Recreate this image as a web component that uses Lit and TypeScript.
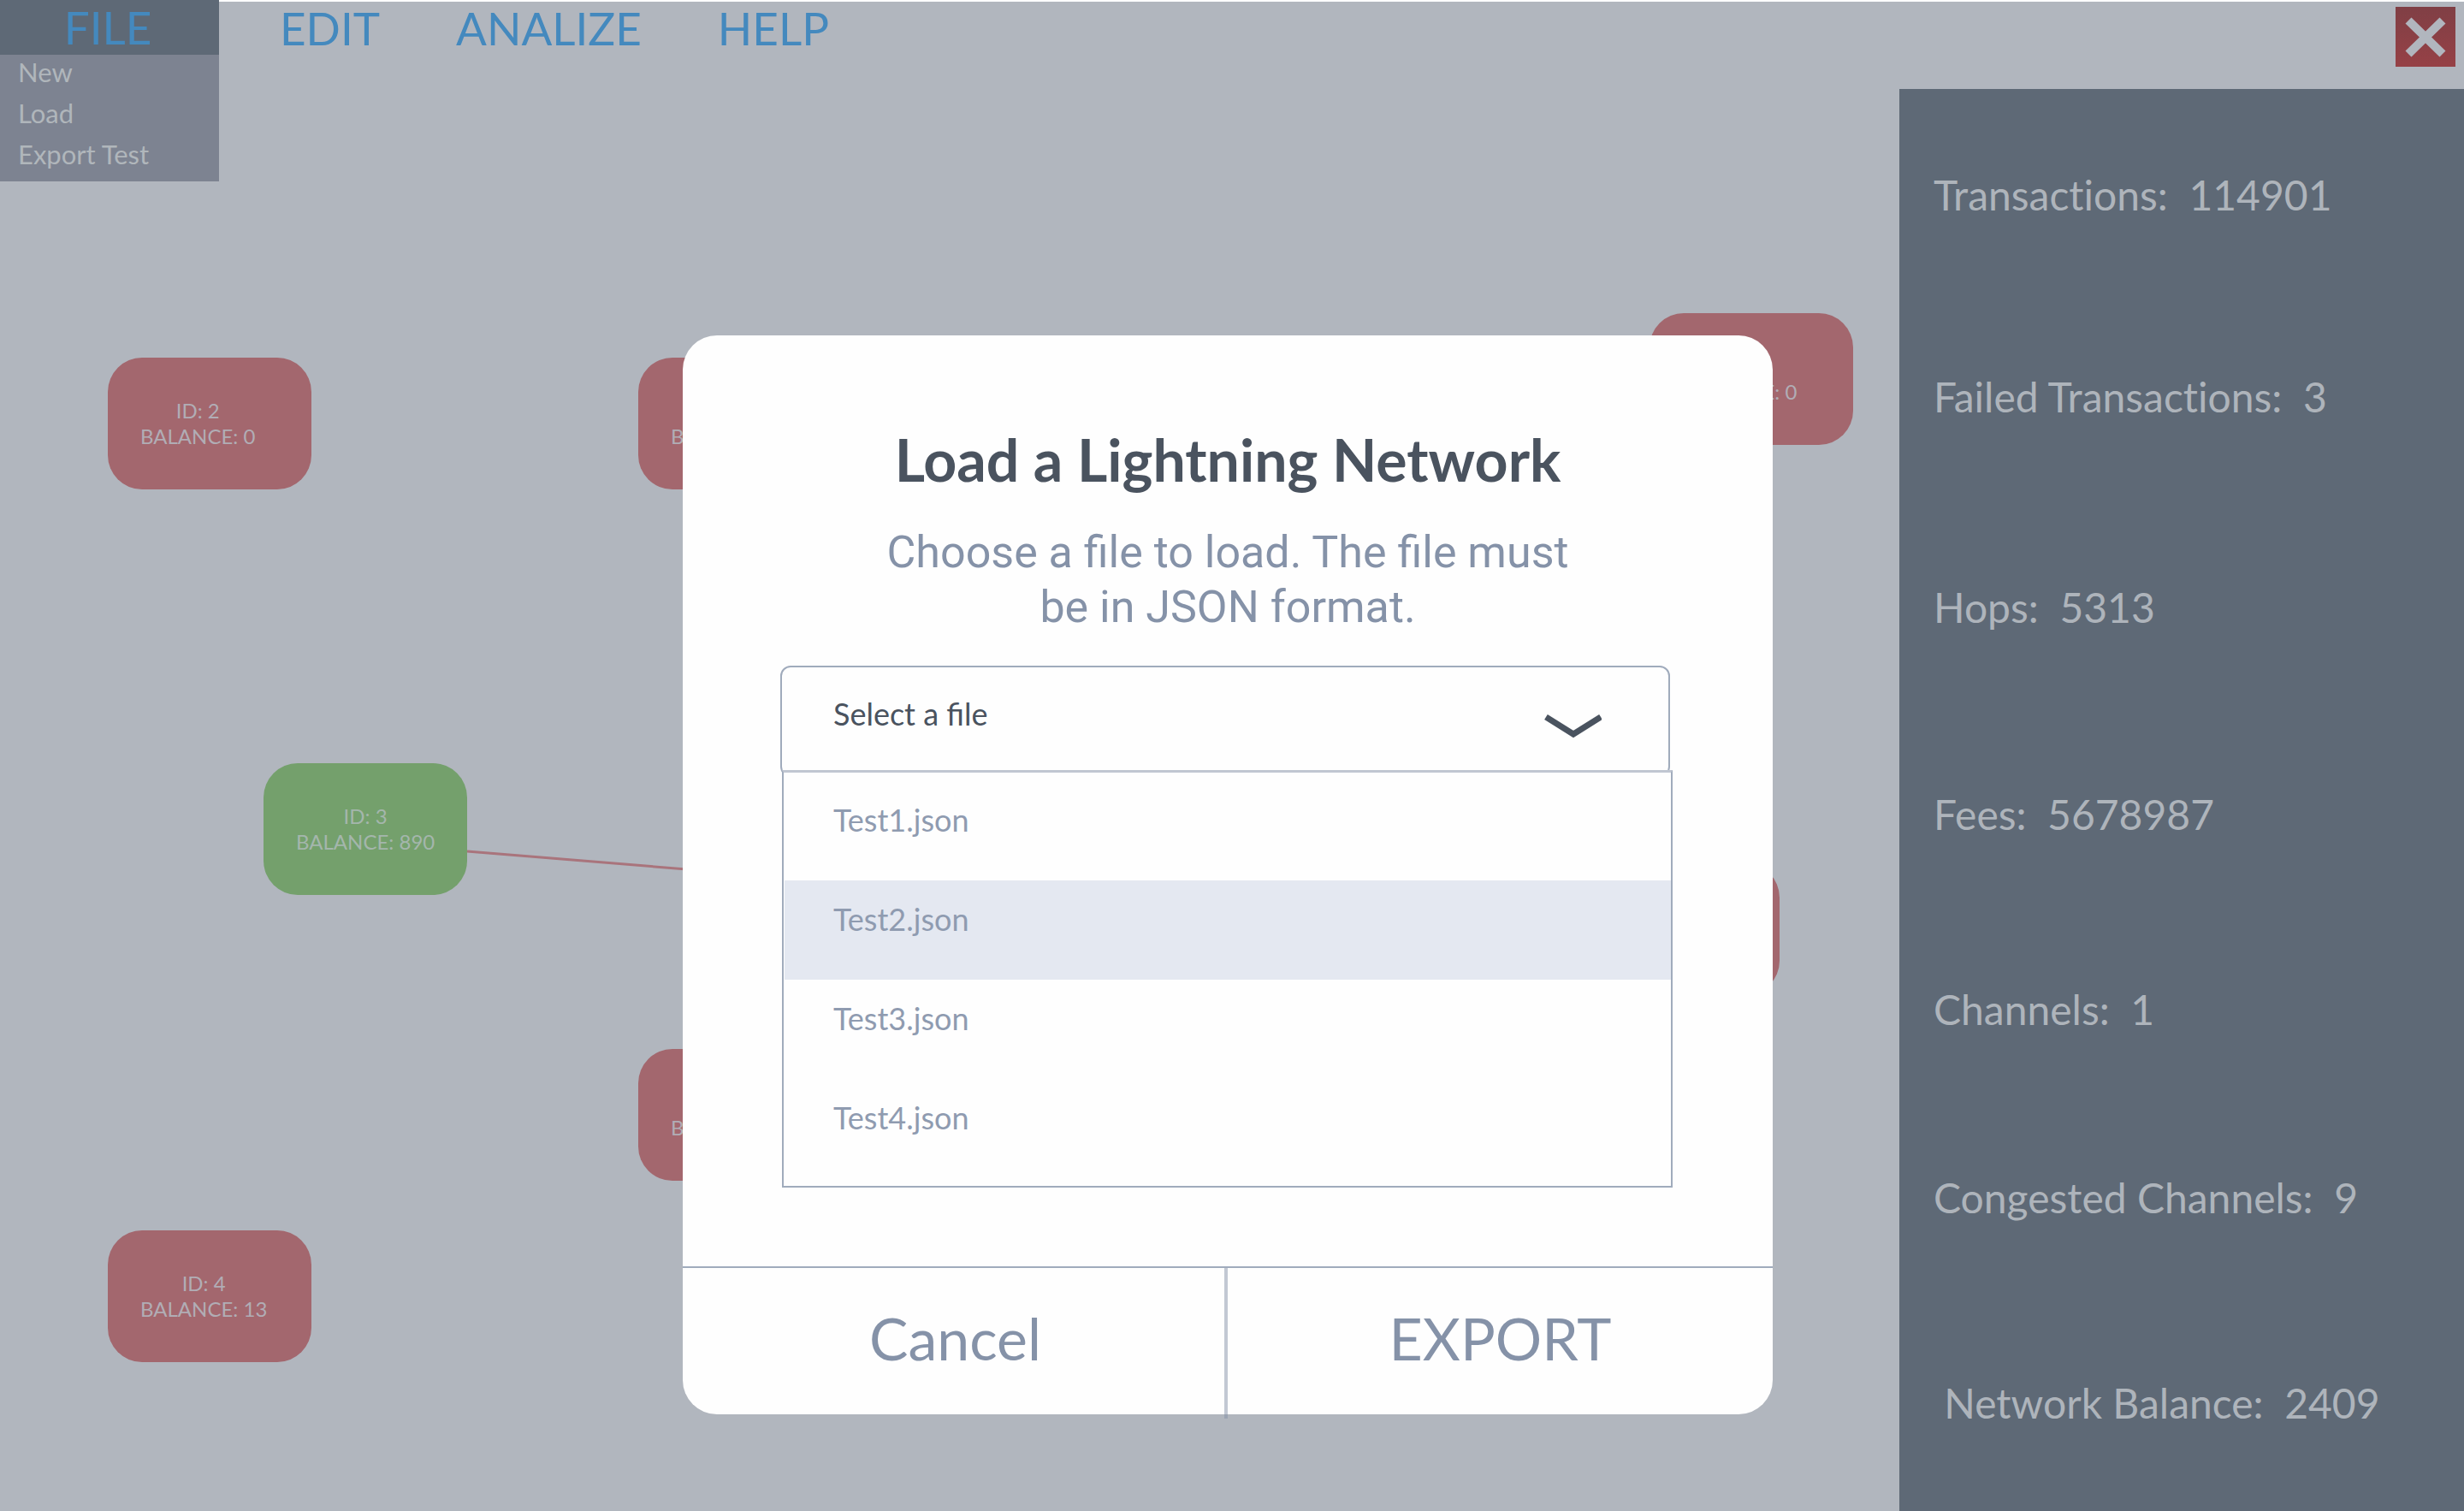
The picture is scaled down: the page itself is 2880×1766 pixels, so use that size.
import { LitElement, html, svg, css, nothing } from "lit";
import { customElement, property, state } from "lit/decorators.js";
import { classMap } from "lit/directives/class-map.js";
import { styleMap } from "lit/directives/style-map.js";

interface NodeInfo {
  x: number;
  y: number;
  id?: number;
  balance?: number;
  funded?: boolean;
}

const NODES: NodeInfo[] = [
  { x: 126, y: 418, id: 2, balance: 0 },
  { x: 746, y: 418, balance: 0 },
  { x: 1928, y: 366, balance: 0 },
  { x: 308, y: 892, id: 3, balance: 890, funded: true },
  { x: 1842, y: 1009 },
  { x: 746, y: 1226, balance: 0 },
  { x: 126, y: 1438, id: 4, balance: 13 },
];

const STATS: [string, number][] = [
  ["Transactions:", 114901],
  ["Failed Transactions:", 3],
  ["Hops:", 5313],
  ["Fees:", 5678987],
  ["Channels:", 1],
  ["Congested Channels:", 9],
  [" Network Balance:", 2409],
];

const FILES = ["Test1.json", "Test2.json", "Test3.json", "Test4.json"];

@customElement("network-node")
export class NetworkNode extends LitElement {
  @property({ attribute: false }) node!: NodeInfo;

  static styles = css`
    :host {
      display: block;
    }
    .node {
      box-sizing: border-box;
      width: 238px;
      height: 154px;
      padding: 47px 38px 0;
      border-radius: 40px;
      background: #a3676e;
      color: #b1adb5;
      font-size: 24px;
      line-height: 30px;
    }
    .funded {
      background: #74a06c;
      color: #a4b6ac;
    }
    .label {
      width: max-content;
      text-align: center;
    }
    .line {
      min-height: 30px;
    }
  `;

  render() {
    const { id, balance, funded } = this.node;
    return html`<div class=${classMap({ node: true, funded: !!funded })}>
      <div class="label">
        <div class="line">${id === undefined ? nothing : `ID: ${id}`}</div>
        <div class="line">${balance === undefined ? nothing : `BALANCE: ${balance}`}</div>
      </div>
    </div>`;
  }
}

@customElement("load-dialog")
export class LoadDialog extends LitElement {
  @state() private highlighted = 1;
  @state() private selected = "";

  static styles = css`
    :host {
      display: block;
    }
    .dialog {
      display: flex;
      flex-direction: column;
      border-radius: 40px;
      background: #fefefe;
      color: #8592a8;
    }
    .title {
      margin: 103px 0 35px;
      color: #4a535f;
      font-size: 68px;
      line-height: 84px;
      font-weight: 700;
      text-align: center;
    }
    .prompt {
      display: block;
      width: 840px;
      margin: 0 auto 36px;
      font-family: Roboto, sans-serif;
      font-size: 52px;
      line-height: 64px;
      text-align: center;
    }
    .picker {
      padding: 0 120px 92px 114px;
    }
    .field {
      display: grid;
      align-items: center;
    }
    .field > * {
      grid-area: 1 / 1;
    }
    .select {
      appearance: none;
      box-sizing: border-box;
      width: 100%;
      height: 130px;
      margin: 0;
      padding: 0 60px 18px;
      border: 2px solid #a0abbc;
      border-radius: 12px;
      background: transparent;
      color: #4a535f;
      font: inherit;
      font-size: 36px;
      outline: none;
    }
    .chevron {
      justify-self: end;
      width: 68px;
      height: 30px;
      margin: 10px 80px 0 0;
      pointer-events: none;
    }
    .list {
      position: relative;
      margin: -8px -3px 0 2px;
      padding: 10px 0 9px 1px;
      border: 2px solid #a0abbc;
      border-top: 3px solid #c0c6d1;
      background: #fefefe;
      list-style: none;
    }
    .option {
      display: block;
      width: 100%;
      height: 116px;
      padding: 0 57px 26px;
      border: 0;
      background: transparent;
      color: #8f9bb0;
      font: inherit;
      font-size: 36px;
      text-align: left;
    }
    .highlighted {
      background: #e4e8f1;
    }
    .actions {
      display: grid;
      grid-template-columns: 1fr 1fr;
      border-top: 2px solid #a0abbc;
    }
    .action {
      position: relative;
      height: 171px;
      padding: 0 0 9px;
      border: 0;
      background: transparent;
      color: #8592a8;
      font: inherit;
      font-size: 68px;
    }
    .action + .action::before {
      content: "";
      position: absolute;
      top: 0;
      bottom: -5px;
      left: -4px;
      width: 4px;
      background: #8592a8;
      opacity: 0.5;
    }
  `;

  private onSelect(e: Event) {
    this.selected = (e.target as HTMLSelectElement).value;
    this.highlighted = FILES.indexOf(this.selected);
  }

  render() {
    return html`<section class="dialog" role="dialog" aria-labelledby="title">
      <h1 class="title" id="title">Load a Lightning Network</h1>
      <label class="prompt" for="file">Choose a file to load. The file must be in JSON format.</label>
      <div class="picker">
        <div class="field">
          <select class="select" id="file" .value=${this.selected} @change=${this.onSelect}>
            <option value="">Select a file</option>
            ${FILES.map((f) => html`<option value=${f}>${f}</option>`)}
          </select>
          <svg class="chevron" viewBox="0 0 68 30" aria-hidden="true">
            <path d="M3 5 L35 25 L67 5" fill="none" stroke="#4a535f" stroke-width="7" />
          </svg>
        </div>
        <ul class="list">
          ${FILES.map(
            (f, i) => html`<li>
              <button
                type="button"
                class=${classMap({ option: true, highlighted: i === this.highlighted })}
                @mouseenter=${() => (this.highlighted = i)}
                @click=${() => (this.selected = f)}
              >${f}</button>
            </li>`
          )}
        </ul>
      </div>
      <div class="actions">
        <button type="button" class="action">Cancel</button>
        <button type="button" class="action">EXPORT</button>
      </div>
    </section>`;
  }
}

@customElement("app-root")
export class AppRoot extends LitElement {
  static styles = css`
    :host {
      display: block;
      font-family: Lato, "Liberation Sans", sans-serif;
    }
    .app {
      position: relative;
      display: grid;
      grid-template-rows: 104px 1fr;
      min-height: 100vh;
      background: linear-gradient(#fcfcfd 2px, #b1b6be 2px);
      overflow: hidden;
    }
    .bar {
      position: relative;
      z-index: 1;
      display: flex;
      align-items: flex-start;
      padding-right: 10px;
    }
    .file {
      width: 256px;
    }
    .menu {
      display: block;
      padding: 0;
      border: 0;
      background: transparent;
      color: #4489be;
      font: inherit;
      font-size: 53px;
      line-height: 62px;
    }
    .file .menu {
      width: 100%;
      height: 64px;
      padding-right: 4px;
      background: #5e6976;
    }
    .tabs {
      display: flex;
      flex: 1;
      gap: 89px;
      padding: 2px 0 0 71px;
    }
    .items {
      position: absolute;
      top: 64px;
      left: 0;
      box-sizing: border-box;
      width: 256px;
      margin: 0;
      padding: 0 0 4px;
      background: #7d8391;
      list-style: none;
    }
    .item {
      display: block;
      width: 100%;
      height: 48px;
      padding: 0 21px 8px;
      border: 0;
      background: transparent;
      color: #b0b6bb;
      font: inherit;
      font-size: 31px;
      text-align: left;
    }
    .close {
      width: 70px;
      height: 70px;
      margin-top: 8px;
      padding: 0;
      border: 0;
      background: linear-gradient(#803f45, #964146);
    }
    .cross {
      display: block;
      width: 70px;
      height: 70px;
    }
    .body {
      display: grid;
      grid-template-columns: 1fr 660px;
    }
    .canvas {
      position: absolute;
      inset: 0;
    }
    .links {
      position: absolute;
      inset: 0;
      width: 100%;
      height: 100%;
    }
    .placed {
      position: absolute;
    }
    .stats {
      grid-column: 2;
      position: relative;
      display: grid;
      grid-template-rows: 236fr 246fr 242fr 228fr 220fr 240fr 155fr;
      margin: 0;
      padding: 95px 0 0 40px;
      background: #5e6976;
      color: #aeb4bb;
      font-size: 48px;
      line-height: 58px;
      font-variant-ligatures: none;
      list-style: none;
      white-space: pre;
    }
    .overlay {
      position: absolute;
      inset: 0;
      z-index: 2;
      display: flex;
      justify-content: center;
      align-items: flex-start;
      padding: 392px 10px 0 0;
    }
    .modal {
      width: 1274px;
    }
  `;

  render() {
    return html`<div class="app">
      <header class="bar">
        <div class="file">
          <button type="button" class="menu" aria-expanded="true">FILE</button>
          <ul class="items">
            ${["New", "Load", "Export Test"].map(
              (t) => html`<li><button type="button" class="item">${t}</button></li>`
            )}
          </ul>
        </div>
        <nav class="tabs">
          ${["EDIT", "ANALIZE", "HELP"].map(
            (t) => html`<button type="button" class="menu">${t}</button>`
          )}
        </nav>
        <button type="button" class="close" aria-label="Close">
          <svg class="cross" viewBox="0 0 70 70" aria-hidden="true">
            <path d="M15 16 L55 55 M55 16 L15 55" fill="none" stroke="#b1b6be" stroke-width="10" />
          </svg>
        </button>
      </header>
      <main class="body">
        <div class="canvas">
          <svg class="links" aria-hidden="true">
            ${svg`<line x1="546" y1="995" x2="1842" y2="1101" stroke="#a9747c" stroke-width="3" />`}
          </svg>
          ${NODES.map(
            (n) => html`<network-node
              class="placed"
              style=${styleMap({ left: `${n.x}px`, top: `${n.y}px` })}
              .node=${n}
            ></network-node>`
          )}
        </div>
        <ul class="stats">
          ${STATS.map(([name, value]) => html`<li>${`${name}  ${value}`}</li>`)}
        </ul>
      </main>
      <div class="overlay"><load-dialog class="modal"></load-dialog></div>
    </div>`;
  }
}
